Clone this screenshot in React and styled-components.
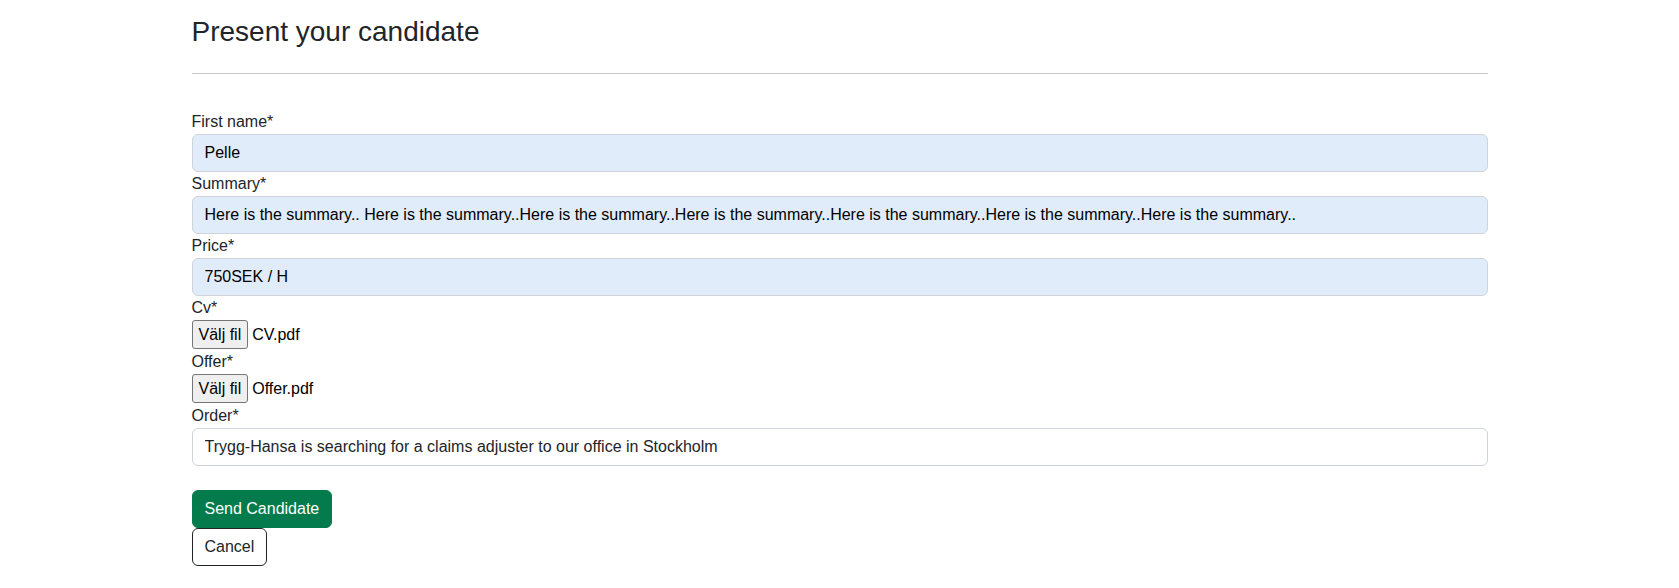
import React from 'react';
import styled, { createGlobalStyle } from 'styled-components';

const GlobalStyle = createGlobalStyle`
  body {
    margin: 0;
    background: #fff;
    color: #212529;
    font-family: "Liberation Sans", Arial, sans-serif;
    font-size: 16px;
    line-height: 1.5;
  }
  * { box-sizing: border-box; }
`;

const Container = styled.div`
  width: 1320px;
  margin: 0 auto;
  padding: 0 12px;
`;

const Title = styled.h3`
  margin: 0 0 8px;
  padding: 15px 0 8px;
  font-size: 28px;
  font-weight: 500;
  line-height: 1.2;
`;

const Divider = styled.hr`
  margin: 16px 0;
  border: 0;
  border-top: 1px solid #c8c9ca;
`;

const Form = styled.form`
  display: flex;
  flex-direction: column;
  align-items: flex-start;
  padding-top: 20px;
`;

const Label = styled.label`
  display: block;
  font-size: 16px;
  line-height: 24px;
`;

const Input = styled.input`
  display: block;
  width: 100%;
  height: 38px;
  padding: 6px 12px;
  font-family: inherit;
  font-size: 16px;
  line-height: 24px;
  color: ${(p) => (p.$filled ? '#000' : '#212529')};
  background: ${(p) => (p.$filled ? '#e1ecfa' : '#fff')};
  border: 1px solid #ced4da;
  border-radius: 6px;
  outline: none;
`;

const FileRow = styled.div`
  display: flex;
  align-items: center;
  gap: 4px;
  height: 30px;
`;

const FileButton = styled.span`
  display: inline-flex;
  align-items: center;
  height: 29px;
  padding: 0 6px;
  font-size: 16px;
  color: #000;
  background: #efefef;
  border: 1px solid #767676;
  border-radius: 3px;
`;

const FileName = styled.span`
  font-size: 16px;
  color: #000;
`;

const Button = styled.button`
  display: inline-block;
  padding: 6px 12px;
  font-family: inherit;
  font-size: 16px;
  line-height: 24px;
  border-radius: 6px;
  cursor: pointer;
  color: ${(p) => (p.$primary ? '#fff' : '#212529')};
  background: ${(p) => (p.$primary ? '#037b4d' : '#fff')};
  border: 1px solid ${(p) => (p.$primary ? '#037b4d' : '#212529')};
`;

const Actions = styled.div`
  display: flex;
  flex-direction: column;
  align-items: flex-start;
  margin-top: 24px;
`;

const fileFields = [
  { label: 'Cv*', file: 'CV.pdf' },
  { label: 'Offer*', file: 'Offer.pdf' },
];

const App = () => {
  return (
    <Container>
      <GlobalStyle />
      <Title>Present your candidate</Title>
      <Divider />
      <Form onSubmit={(e) => e.preventDefault()}>
        <Label>First name*</Label>
        <Input $filled defaultValue="Pelle" />
        <Label>Summary*</Label>
        <Input
          $filled
          defaultValue="Here is the summary.. Here is the summary..Here is the summary..Here is the summary..Here is the summary..Here is the summary..Here is the summary.."
        />
        <Label>Price*</Label>
        <Input $filled defaultValue="750SEK / H" />
        {fileFields.map((f) => (
          <React.Fragment key={f.label}>
            <Label>{f.label}</Label>
            <FileRow>
              <FileButton>Välj fil</FileButton>
              <FileName>{f.file}</FileName>
            </FileRow>
          </React.Fragment>
        ))}
        <Label>Order*</Label>
        <Input defaultValue="Trygg-Hansa is searching for a claims adjuster to our office in Stockholm" />
        <Actions>
          <Button $primary type="submit">Send Candidate</Button>
          <Button type="button">Cancel</Button>
        </Actions>
      </Form>
    </Container>
  );
};

export default App;
